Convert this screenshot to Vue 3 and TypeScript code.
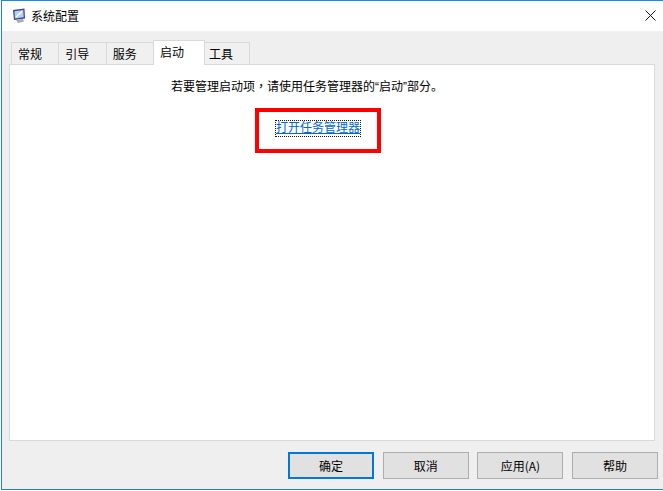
<script setup lang="ts">
const tabs = [
  { label: '常规', active: false },
  { label: '引导', active: false },
  { label: '服务', active: false },
  { label: '启动', active: true },
  { label: '工具', active: false },
]
const buttons = [
  { label: '确定', primary: true },
  { label: '取消', primary: false },
  { label: '应用(A)', primary: false },
  { label: '帮助', primary: false },
]
</script>

<template>
  <div class="page">
    <div class="window">
      <header class="titlebar">
        <svg class="app-icon" width="15" height="16" viewBox="0 0 15 16">
          <path d="M2 2 L13.5 0.5 L14 10.5 L3 12 Z" fill="#34478f" />
          <path d="M3.5 3.2 L12.3 2 L12.7 9.3 L4 10.5 Z" fill="#b5d0f0" />
          <path d="M5 9 L11 3.5" stroke="#ffffff" stroke-width="1.3" />
          <path d="M5 12 L12 11 L13 13.5 L7 15 Z" fill="#a6a9b2" />
        </svg>
        <span class="title">系统配置</span>
        <svg class="close" width="11" height="11" viewBox="0 0 11 11">
          <path d="M0.5 0.5 L10.5 10.5 M10.5 0.5 L0.5 10.5" stroke="#111111" stroke-width="1" fill="none" />
        </svg>
      </header>
      <div class="body">
        <nav class="tabs">
          <div v-for="t in tabs" :key="t.label" class="tab" :class="{ active: t.active }">{{ t.label }}</div>
        </nav>
        <section class="panel">
          <p class="hint">若要管理启动项<span class="comma" lang="zh-TW">&#xFF0C;</span>请使用任务管理器的“启动”部分。</p>
          <div class="link-wrap">
            <a class="link">打开任务管理器</a>
            <div class="highlight"></div>
          </div>
        </section>
        <footer class="actions">
          <button v-for="b in buttons" :key="b.label" class="btn" :class="{ primary: b.primary }">{{ b.label }}</button>
        </footer>
      </div>
    </div>
  </div>
</template>

<style>
html, body { margin: 0; background: #ffffff; overflow: hidden; }
</style>

<style scoped>
.page {
  width: 663px;
  height: 491px;
  padding-left: 1px;
  box-sizing: border-box;
  font-family: "Noto Sans CJK SC", "Liberation Sans", sans-serif;
  font-size: 12px;
  color: #000000;
}
.window {
  width: 662px;
  height: 490px;
  box-sizing: border-box;
  border: 1px solid #2b7ccc;
  border-right: none;
  border-top-color: #1e88e0;
  display: flex;
  flex-direction: column;
  background: #efefef;
}
.titlebar {
  height: 30px;
  flex: none;
  background: #ffffff;
  display: flex;
  align-items: center;
  padding: 0 7px 0 9px;
}
.app-icon { margin-right: 5px; }
.title { flex: 1; line-height: 16px; }
.close { flex: none; margin-top: -1px; }
.body {
  flex: 1;
  display: flex;
  flex-direction: column;
  padding: 10px 0 0 7px;
  min-height: 0;
}
.tabs {
  display: flex;
  align-items: flex-end;
  height: 23px;
  position: relative;
  z-index: 1;
}
.tab {
  width: 48.33px;
  height: 22px;
  box-sizing: border-box;
  border: 1px solid #d9d9d9;
  border-bottom: none;
  margin-left: -1px;
  padding-left: 6px;
  line-height: 21px;
  background: #f0f0f0;
}
.tab:first-child { margin-left: 2px; }
.tab:last-child { width: 46px; padding-left: 4px; }
.tab.active {
  width: 52px;
  height: 25px;
  margin-bottom: -1px;
  background: #ffffff;
  line-height: 22px;
}
.panel {
  width: 646px;
  height: 377px;
  flex: none;
  box-sizing: border-box;
  background: #ffffff;
  border: 1px solid #d9d9d9;
  display: flex;
  flex-direction: column;
  align-items: flex-start;
}
.hint {
  margin: 12px 0 0 161px;
  font-family: "Liberation Sans", "Noto Sans CJK SC", sans-serif;
  line-height: 18px;
  white-space: nowrap;
}
.comma { font-family: "Noto Sans CJK TC", sans-serif; }
.link-wrap {
  position: relative;
  margin: 24px 0 0 265px;
}
.link {
  display: block;
  padding: 0 1px 3px;
  color: #0066cc;
  text-decoration: underline;
  outline: 1px dotted #111111;
  outline-offset: -1px;
  line-height: 14px;
  white-space: nowrap;
}
.highlight {
  position: absolute;
  left: -20px;
  top: -12px;
  width: 126px;
  height: 45px;
  box-sizing: border-box;
  border: 4px solid #ff0000;
}
.actions {
  display: flex;
  gap: 8.67px;
  justify-content: flex-end;
  padding: 11px 5px 0 0;
}
.btn {
  width: 86px;
  height: 27px;
  padding: 0;
  box-sizing: border-box;
  border: 1px solid #adadad;
  background: #e1e1e1;
  font: inherit;
  color: #000000;
}
.btn.primary { border: 2px solid #0078d7; }
</style>
